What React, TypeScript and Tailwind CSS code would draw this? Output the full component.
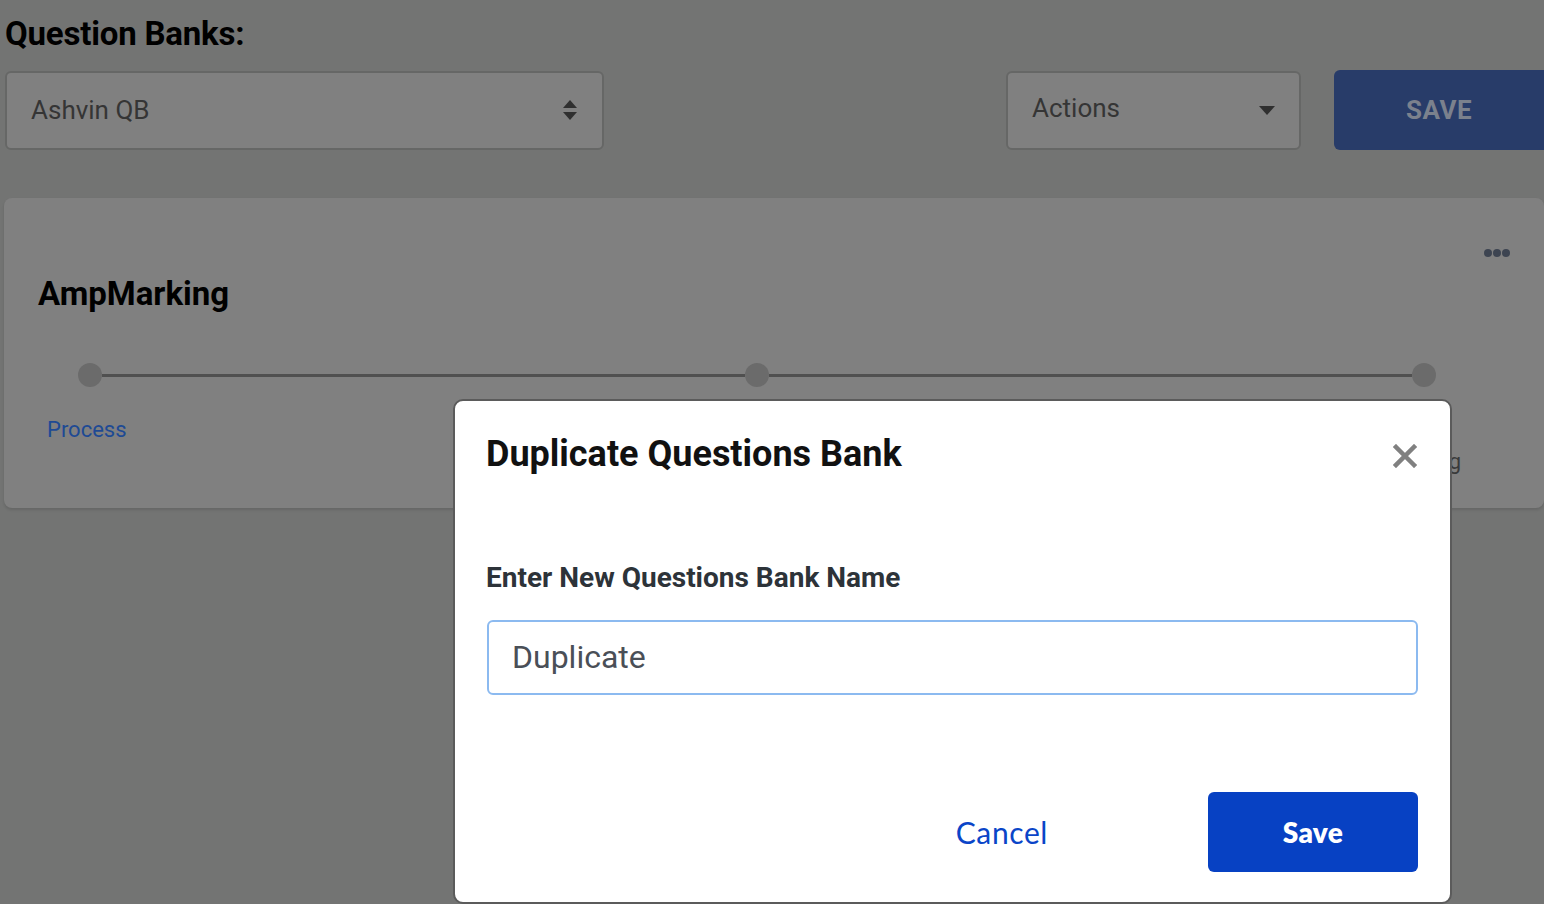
import React from "react";

function SortIcon() {
  return (
    <svg width="16" height="22" viewBox="0 0 16 22" className="shrink-0">
      <path d="M8 1 L15 9 H1 Z" fill="#2f2f2f" />
      <path d="M8 21 L15 13 H1 Z" fill="#2f2f2f" />
    </svg>
  );
}

function CaretDown() {
  return (
    <svg width="16" height="9" viewBox="0 0 16 9" className="shrink-0">
      <path d="M0 0 H16 L8 9 Z" fill="#2f2f2f" />
    </svg>
  );
}

function CloseX() {
  return (
    <svg width="24" height="24" viewBox="0 0 24 24">
      <path d="M3 3 L21 21 M21 3 L3 21" stroke="#808080" strokeWidth="4.5" strokeLinecap="square" />
    </svg>
  );
}

export default function App() {
  return (
    <div className="relative w-[1544px] h-[904px] overflow-hidden bg-[#737473] font-['Roboto',sans-serif]">
      {/* Header area */}
      <div className="pl-[5px] pt-[15px]">
        <h1 className="text-[33px] leading-[38px] font-bold text-black tracking-[-0.2px]">Question Banks:</h1>
        <div className="mt-[17px] flex items-center">
          <div className="w-[599px] h-[79px] rounded-[6px] border-2 border-[#666766] bg-[#808080] flex items-center pl-[24px] pr-[24px]">
            <span className="flex-1 text-[26px] text-[#353535]">Ashvin QB</span>
            <SortIcon />
          </div>
          <div className="ml-auto w-[295px] h-[79px] rounded-[6px] border-2 border-[#666766] bg-[#808080] flex items-center pl-[24px] pr-[24px]">
            <span className="flex-1 text-[26px] text-[#353535] -mt-[4px]">Actions</span>
            <CaretDown />
          </div>
          <div className="ml-[33px] w-[210px] h-[80px] rounded-l-[6px] bg-[#283c69] flex items-center justify-center">
            <span className="text-[26px] font-bold text-[#7b818d] tracking-[0.5px]">SAVE</span>
          </div>
        </div>
      </div>

      {/* Card */}
      <div className="mt-[48px] ml-[4px] h-[310px] rounded-[8px] bg-[#808080] shadow-[0_2px_3px_rgba(0,0,0,0.12)] pl-[34px] pr-[32px] pt-[44px] relative">
        <div className="flex items-start justify-between">
          <h2 className="mt-[32px] text-[33px] leading-[40px] font-bold text-black">AmpMarking</h2>
          <div className="flex gap-[1px] mt-[7px] mr-[2px]">
            <span className="w-[8px] h-[8px] rounded-full bg-[#3d4451]" />
            <span className="w-[8px] h-[8px] rounded-full bg-[#3d4451]" />
            <span className="w-[8px] h-[8px] rounded-full bg-[#3d4451]" />
          </div>
        </div>
        <div className="mt-[49px] ml-[40px] mr-[76px] flex items-center">
          <span className="w-[24px] h-[24px] rounded-full bg-[#6b6b6b] shrink-0" />
          <span className="flex-1 h-[3px] bg-[#505050]" />
          <span className="w-[24px] h-[24px] rounded-full bg-[#6b6b6b] shrink-0" />
          <span className="flex-1 h-[3px] bg-[#505050]" />
          <span className="w-[24px] h-[24px] rounded-full bg-[#6b6b6b] shrink-0" />
        </div>
        <div className="mt-[29px] ml-[9px] mr-[51px] flex items-start justify-between">
          <span className="text-[22px] leading-[28px] text-[#1e4a94]">Process</span>
          <span className="mt-[32px] text-[22px] leading-[28px] text-[#3a3a3a]">Marking</span>
        </div>
      </div>

      {/* Modal */}
      <div className="absolute left-[453px] top-[399px] w-[999px] h-[505px] rounded-[10px] border-2 border-[#5b5b5b] bg-white pl-[31px] pr-[32px] pt-[30px]">
        <div className="flex items-start justify-between">
          <h3 className="text-[36px] leading-[46px] font-bold text-[#111111]">Duplicate Questions Bank</h3>
          <div className="mt-[13px] mr-[1px]">
            <CloseX />
          </div>
        </div>
        <label className="block mt-[84px] text-[28px] leading-[34px] font-bold text-[#2d3339]">Enter New Questions Bank Name</label>
        <div className="mt-[25px] ml-[1px] h-[75px] rounded-[6px] border-2 border-[#8cbaf0] flex items-center pl-[23px]">
          <span className="text-[32px] text-[#4a4f57] -mt-[1px]">Duplicate</span>
        </div>
        <div className="mt-[97px] flex items-center justify-end">
          <span className="font-['Lato',sans-serif] text-[30px] text-[#0a45c8] mr-[160px] tracking-[0.6px]">Cancel</span>
          <div className="w-[210px] h-[80px] rounded-[6px] bg-[#0741c3] flex items-center justify-center">
            <span className="font-['Lato',sans-serif] text-[28px] font-extrabold text-white tracking-[0.3px]">Save</span>
          </div>
        </div>
      </div>
    </div>
  );
}
